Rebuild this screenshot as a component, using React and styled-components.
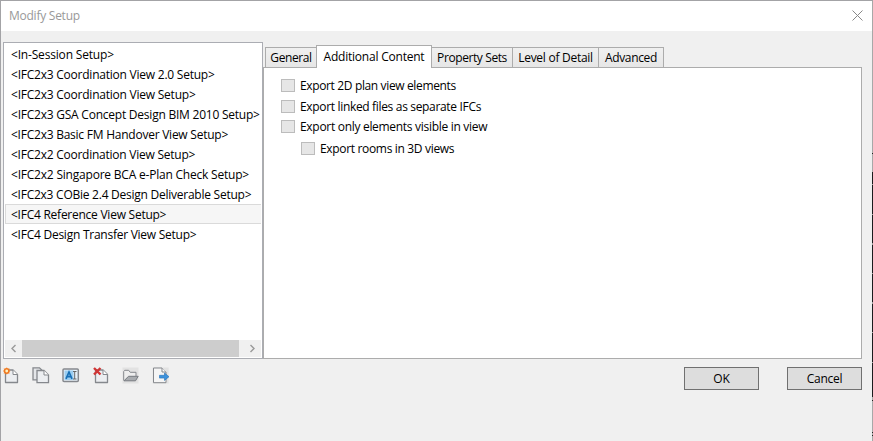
import React from "react";
import styled, { createGlobalStyle } from "styled-components";

const Global = createGlobalStyle`
  * { box-sizing: border-box; }
  body { margin: 0; overflow: hidden; font: 12px/16px "Open Sans", "Noto Sans", sans-serif; color: #000; }
`;
const Dialog = styled.div`
  width: 873px; height: 441px; background: #f0f0f0; display: flex; flex-direction: column;
  border-left: 1px solid #a3a3a6; border-top: 1px solid #a3a3a6; position: relative;
`;
const Edge = styled.div`
  position: absolute; right: 0; top: 0; width: 1px; height: 440px;
  background: linear-gradient(#a8a8a8 0 152px, #222 152px 153px, #a8a8a8 153px 171px, #1c1c1e 171px 183px,
    #999 183px 184px, #1c1c1e 184px 213px, #999 213px 214px, #1c1c1e 214px 242px, #999 242px 244px,
    #1c1c1e 244px 272px, #999 272px 273px, #1c1c1e 273px 301px, #999 301px 303px, #1c1c1e 303px 331px,
    #999 331px 332px, #1c1c1e 332px 361px, #999 361px 362px,
    #1c1c1e 362px 396px, #a8a8a8 396px 399px, #222 399px 400px, #a8a8a8 400px 431px, #222 431px 432px,
    #a8a8a8 432px 434px, #222 434px 435px, #a8a8a8 435px);
`;
const TitleBar = styled.header`
  height: 30px; background: #fff; color: #999; display: flex; align-items: center;
  justify-content: space-between; padding: 0 10px 0 8px; flex: none;
`;
const CloseIcon = styled.svg`width: 11px; height: 11px; margin-bottom: 1px; stroke: #888; fill: none;`;
const Label = styled.span`
  white-space: nowrap; letter-spacing: ${(p) => p.$s || 0}px;
`;
const Main = styled.main`
  display: flex; align-items: flex-end; height: 328px; padding-left: 2px; flex: none;
`;
const ListBox = styled.section`
  width: 260px; height: 317px; background: #fff; border: 1px solid #abadb3; padding: 1px;
  display: flex; flex-direction: column; justify-content: space-between;
`;
const List = styled.ul`margin: 0; padding: 0; list-style: none;`;
const Item = styled.li`
  height: 20px; padding: 2px 0 0 5px;
  border: solid ${(p) => (p.$on ? "#dadada" : "transparent")}; border-width: 1px 0 1px 1px;
  background: ${(p) => (p.$on ? "#f6f6f6" : "transparent")};
  display: flex; align-items: center;
`;
const ScrollBar = styled.div`height: 17px; background: #f0f0f0; display: flex; align-items: center;`;
const Thumb = styled.div`width: 217px; height: 17px; margin-right: auto; background: #cdcdcd;`;
const Arrow = styled.svg`display: block; width: 17px; height: 17px; fill: none; stroke: #999; stroke-width: 1.4;`;
const Tabs = styled.section`width: 599px; height: 314px; display: flex; flex-direction: column;`;
const TabRow = styled.nav`display: flex; align-items: flex-end; height: 22px; padding-left: 2px; flex: none;`;
const Tab = styled.div`
  width: ${(p) => p.$w}px; height: ${(p) => (p.$on ? 23 : 20)}px; margin-bottom: ${(p) => (p.$on ? -1 : 0)}px;
  background: ${(p) => (p.$on ? "#fff" : "linear-gradient(#f0f0f0, #e6e6e6)")};
  border: 1px solid #acacac; border-bottom: 0; margin-right: -1px; position: relative; z-index: ${(p) => (p.$on ? 1 : 0)};
  display: flex; justify-content: center; align-items: center; padding-bottom: ${(p) => (p.$on ? 1 : 0)}px;
`;
const Panel = styled.div`
  flex: 1; background: #fff; border: 1px solid #acacac; padding: 11px 17px;
`;
const Check = styled.div`
  display: flex; align-items: center; gap: 5px; height: 13px;
  margin: 0 0 ${(p) => p.$gap}px ${(p) => p.$indent || 0}px;
`;
const Box = styled.span`width: 14px; height: 13px; border: 1px solid #bcbcbc; background: #e6e6e6; flex: none;`;
const Footer = styled.footer`display: flex; justify-content: space-between; padding: 8px 11px 0 2px;`;
const Tools = styled.div`display: flex; gap: 14px; height: 16px;`;
const Icon = styled.svg`width: 16px; height: 16px; display: block; overflow: visible;`;
const Actions = styled.div`display: flex; gap: 28px;`;
const Button = styled.button`
  width: 75px; height: 23px; padding: 0; border: 1px solid #707070; background: #ddd;
  font: inherit; color: inherit; display: flex; align-items: center; justify-content: center;
`;

const setups = [
  ["<In-Session Setup>", -0.18],
  ["<IFC2x3 Coordination View 2.0 Setup>", -0.23],
  ["<IFC2x3 Coordination View Setup>", -0.23],
  ["<IFC2x3 GSA Concept Design BIM 2010 Setup>", -0.23],
  ["<IFC2x3 Basic FM Handover View Setup>", -0.24],
  ["<IFC2x2 Coordination View Setup>", -0.24],
  ["<IFC2x2 Singapore BCA e-Plan Check Setup>", -0.21],
  ["<IFC2x3 COBie 2.4 Design Deliverable Setup>", -0.25],
  ["<IFC4 Reference View Setup>", -0.25],
  ["<IFC4 Design Transfer View Setup>", -0.25],
];
const tabs = [
  ["General", 52, -0.4],
  ["Additional Content", 116, -0.22],
  ["Property Sets", 82, -0.4],
  ["Level of Detail", 87, -0.27],
  ["Advanced", 66, -0.35],
];
const checks = [
  ["Export 2D plan view elements", 8, 0, -0.36],
  ["Export linked files as separate IFCs", 7, 0, -0.33],
  ["Export only elements visible in view", 9, 0, -0.3],
  ["Export rooms in 3D views", 0, 20, -0.33],
];

function Sheet() {
  return (
    <>
      <path d="M2.500 3h7.500l4.500 4.500V15.500h-12z" fill="#eceef1" stroke="#85888d" strokeWidth="1.3" strokeLinejoin="round" />
      <path d="M10 3v4.500h4.500" fill="#fff" stroke="#85888d" />
    </>
  );
}

export default function App() {
  return (
    <Dialog>
      <Global />
      <Edge />
      <TitleBar>
        <Label $s={-0.25}>Modify Setup</Label>
        <CloseIcon viewBox="0 0 11 11"><path d="M.5.5l10 10M10.500.5l-10 10" /></CloseIcon>
      </TitleBar>
      <Main>
        <ListBox>
          <List>
            {setups.map(([t, s]) => (
              <Item key={t} $on={t === "<IFC4 Reference View Setup>"}><Label $s={s}>{t}</Label></Item>
            ))}
          </List>
          <ScrollBar>
            <Arrow viewBox="0 0 17 17"><path d="M10.500 5L7 8.500l3.500 3.500" /></Arrow>
            <Thumb />
            <Arrow viewBox="0 0 17 17"><path d="M6.500 5L10 8.500 6.500 12" /></Arrow>
          </ScrollBar>
        </ListBox>
        <Tabs>
          <TabRow>
            {tabs.map(([t, w, s], i) => <Tab key={t} $w={w} $on={i === 1}><Label $s={s}>{t}</Label></Tab>)}
          </TabRow>
          <Panel>
            {checks.map(([t, gap, indent, s]) => (
              <Check key={t} $gap={gap} $indent={indent}><Box /><Label $s={s}>{t}</Label></Check>
            ))}
          </Panel>
        </Tabs>
      </Main>
      <Footer>
        <Tools>
          <Icon viewBox="0 0 16 16">
            <Sheet />
            <path d="M3.700.5v7M.2 4h7M1.200 1.500l5 5M6.200 1.500l-5 5" stroke="#f6a050" strokeWidth="1" />
            <circle cx="3.7" cy="4" r="2.2" fill="#fff2c0" stroke="#f07820" strokeWidth="1.6" />
          </Icon>
          <Icon viewBox="0 0 16 16">
            <path d="M0 .8h6.500l3 3v9H0z" fill="#e4e6e9" stroke="#85888d" strokeWidth="1.3" />
            <path d="M4 3.500h7l4.500 4.500v7.700H4z" fill="#eceef1" stroke="#85888d" strokeWidth="1.3" />
            <path d="M11 3.500V8h4.500" fill="#fff" stroke="#85888d" />
          </Icon>
          <Icon viewBox="0 0 16 16">
            <rect x="0" y="2" width="15.3" height="12.5" rx="1" fill="#e8f2fa" stroke="#85888d" strokeWidth="1.5" />
            <rect x="1.500" y="3.500" width="9" height="9.500" fill="#9bcdf0" />
            <path d="M3 11.800L6 5l3 6.800M4 9.600h4" fill="none" stroke="#176fb5" strokeWidth="1.700" />
            <path d="M10 4.500h3.500M11.700 4.500v7.500M10 12h3.500" fill="none" stroke="#666" />
          </Icon>
          <Icon viewBox="0 0 16 16">
            <Sheet />
            <path d="M1 1l6.500 6.500M7.500 1L1 7.500" stroke="#d03535" strokeWidth="2.4" />
          </Icon>
          <Icon viewBox="0 0 16 16">
            <path d="M-.5.5h16v16h-16z" fill="#e2e2e2" />
            <path d="M.7 13.500V4.500l1-1.200h4l1.500 2h5.800V9" fill="#eee" stroke="#85888d" />
            <path d="M1 13.800L5.500 9.300H15.200L12.500 13.800z" fill="#a9acb0" stroke="#777b80" />
          </Icon>
          <Icon viewBox="0 0 16 16">
            <path d="M-.3.500h16v16h-16z" fill="#e2e2e2" />
            <path d="M.5 1h8.500l4 4v10.700H.5z" fill="#f5f5f5" stroke="#85888d" />
            <path d="M9 1v4h4" fill="#fff" stroke="#85888d" />
            <path d="M6.500 8.300h5V6l4.500 3.700-4.500 3.700v-2.300h-5z" fill="#3d92dc" stroke="#2170b8" strokeWidth=".6" />
          </Icon>
        </Tools>
        <Actions><Button><Label>OK</Label></Button><Button><Label $s={-0.3}>Cancel</Label></Button></Actions>
      </Footer>
    </Dialog>
  );
}
